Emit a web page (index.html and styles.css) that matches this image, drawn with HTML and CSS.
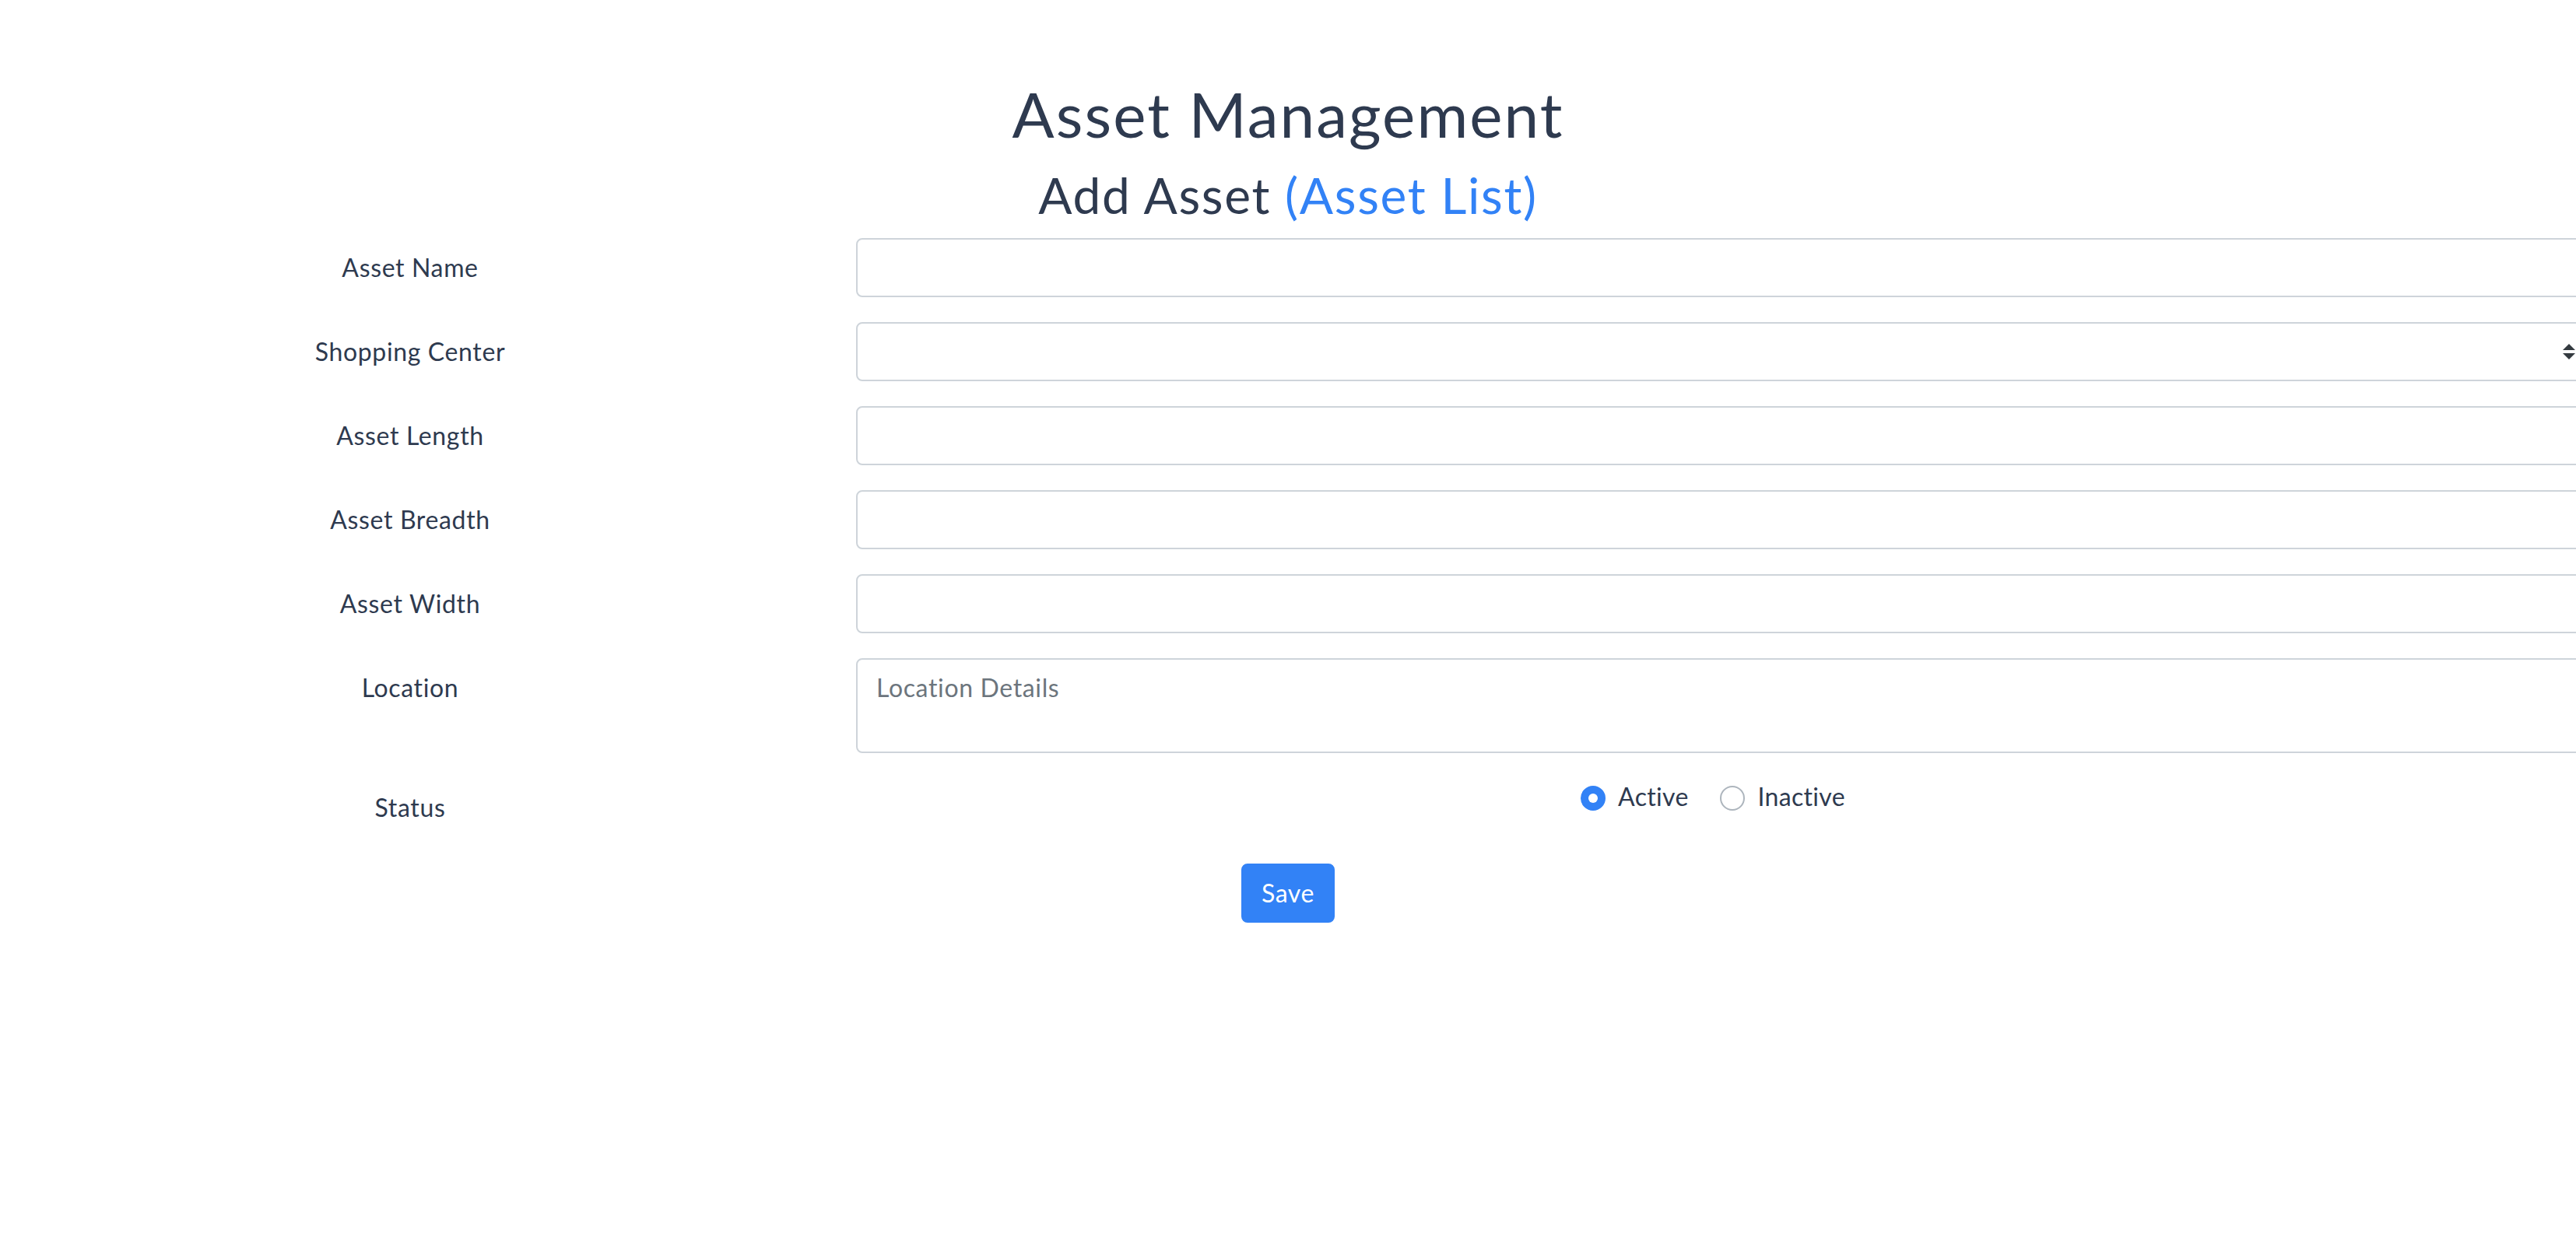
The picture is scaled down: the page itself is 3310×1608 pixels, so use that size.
FILE: index.html
```html
<!DOCTYPE html>
<html lang="en">
<head>
<meta charset="utf-8">
<title>Asset Management</title>
<link rel="stylesheet" href="styles.css">
</head>
<body>
<div class="page">
  <h1 class="title">Asset Management</h1>
  <h2 class="subtitle">Add Asset <a class="link" href="#">(Asset List)</a></h2>
  <form class="form">
    <div class="row">
      <label class="label">Asset Name</label>
      <div class="field"><input class="control" type="text"></div>
    </div>
    <div class="row">
      <label class="label">Shopping Center</label>
      <div class="field select-wrap">
        <select class="control select"><option></option></select>
        <svg class="select-arrow" viewBox="0 0 4 5" width="16" height="20"><path d="M2 0L0 2h4zm0 5L0 3h4z" fill="#343a40"/></svg>
      </div>
    </div>
    <div class="row">
      <label class="label">Asset Length</label>
      <div class="field"><input class="control" type="text"></div>
    </div>
    <div class="row">
      <label class="label">Asset Breadth</label>
      <div class="field"><input class="control" type="text"></div>
    </div>
    <div class="row">
      <label class="label">Asset Width</label>
      <div class="field"><input class="control" type="text"></div>
    </div>
    <div class="row">
      <label class="label">Location</label>
      <div class="field"><textarea class="control area" rows="2" placeholder="Location Details"></textarea></div>
    </div>
    <div class="row">
      <label class="label">Status</label>
      <div class="field radios">
        <span class="radio"><span class="dot dot-on"></span><span class="radio-text">Active</span></span>
        <span class="radio"><span class="dot"></span><span class="radio-text">Inactive</span></span>
      </div>
    </div>
    <div class="actions">
      <button class="btn" type="button">Save</button>
    </div>
  </form>
</div>
</body>
</html>
```

FILE: styles.css
```css
html, body {
  margin: 0;
  padding: 0;
  background: #ffffff;
}
body {
  overflow-x: hidden;
  font-family: Lato, "Open Sans", sans-serif;
  font-size: 32px;
  line-height: 1.5;
  letter-spacing: 0.02em;
  color: #2e3a4f;
}
.page {
  padding-top: 98px;
}
.title {
  margin: 0 0 19px;
  font-size: 80px;
  line-height: 1.2;
  font-weight: 400;
  letter-spacing: 0.026em;
  text-align: center;
}
.subtitle {
  margin: 0 0 16px;
  font-size: 64px;
  line-height: 1.2;
  font-weight: 400;
  letter-spacing: 0.026em;
  text-align: center;
}
.link {
  color: #3282f6;
  text-decoration: none;
}
.form {
  display: flex;
  flex-direction: column;
}
.row {
  display: grid;
  grid-template-columns: 1054px 2234px;
  column-gap: 46px;
  align-items: start;
  margin-bottom: 32px;
}
.label {
  padding-top: 14px;
  padding-bottom: 14px;
  line-height: 48px;
  text-align: center;
}
.field {
  position: relative;
}
.control {
  display: block;
  box-sizing: border-box;
  width: 100%;
  height: 76px;
  margin: 0;
  padding: 12px 24px;
  border: 2px solid #ced4da;
  border-radius: 8px;
  background: #ffffff;
  font-family: inherit;
  font-size: 32px;
  letter-spacing: 0.02em;
  line-height: 48px;
  color: #495057;
  outline: none;
}
.select {
  appearance: none;
  -webkit-appearance: none;
  padding-right: 64px;
}
.select-arrow {
  position: absolute;
  right: 25px;
  top: 28px;
}
.area {
  height: 122px;
  resize: vertical;
}
.area::placeholder {
  color: #6c757d;
  opacity: 1;
}
.radios {
  text-align: center;
  line-height: 48px;
}
.radio {
  display: inline-flex;
  align-items: center;
  gap: 16px;
  margin-right: 32px;
  vertical-align: top;
}
.radio-text {
  letter-spacing: 0.01em;
}
.dot {
  display: inline-block;
  box-sizing: border-box;
  width: 32px;
  height: 32px;
  border-radius: 50%;
  border: 2px solid #adb5bd;
  background: #ffffff;
  margin-top: 4px;
  position: relative;
}
.dot-on {
  border-color: #3282f6;
  background: #3282f6;
}
.dot-on::after {
  content: "";
  position: absolute;
  left: 8px;
  top: 8px;
  width: 12px;
  height: 12px;
  border-radius: 50%;
  background: #ffffff;
}
.actions {
  text-align: center;
  padding-top: 2px;
}
.btn {
  display: inline-block;
  box-sizing: border-box;
  height: 76px;
  padding: 12px 24px;
  border: 2px solid #3282f6;
  border-radius: 8px;
  background: #3282f6;
  color: #ffffff;
  font-family: inherit;
  font-size: 32px;
  letter-spacing: 0.02em;
  line-height: 48px;
  cursor: pointer;
}
```
